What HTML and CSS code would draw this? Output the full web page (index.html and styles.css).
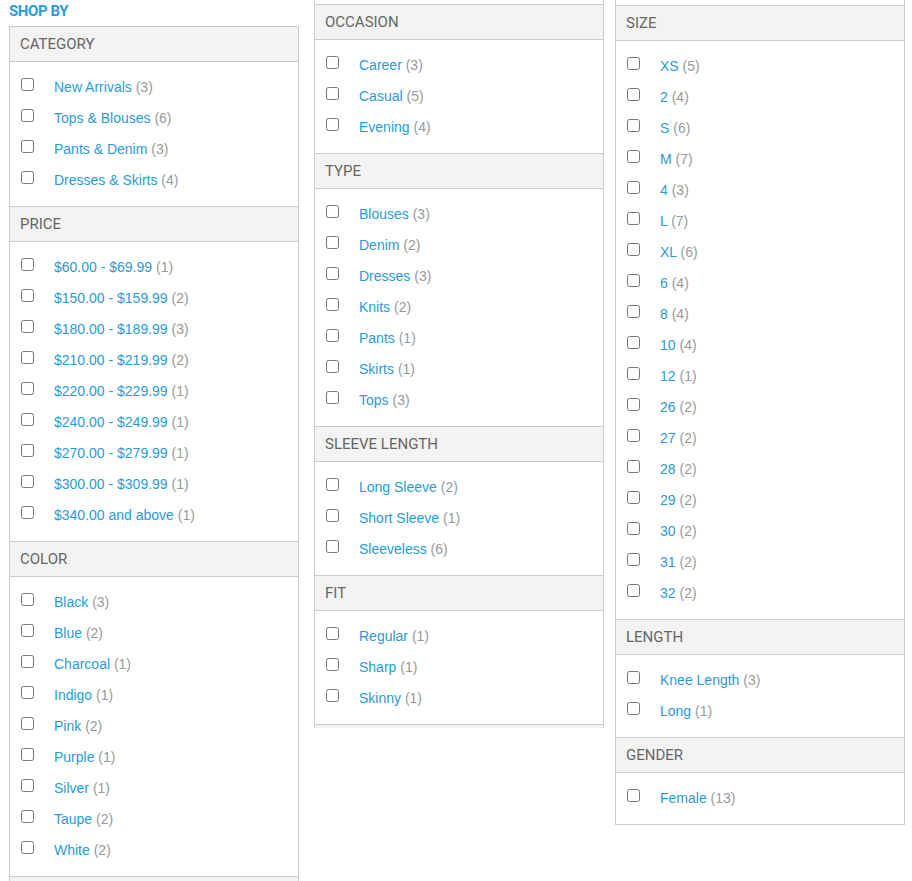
FILE: index.html
```html
<!DOCTYPE html>
<html>
<head>
<meta charset="utf-8">
<link rel="stylesheet" href="styles.css">
</head>
<body>
<div class="layout">
  <div class="col col-1">
    <div class="shop-by">SHOP BY</div>
    <div class="panel">
      <div class="sec-head">CATEGORY</div>
      <ul class="list">
        <li><input type="checkbox"><span class="lbl"><a>New Arrivals</a> <span class="cnt">(3)</span></span></li>
        <li><input type="checkbox"><span class="lbl"><a>Tops &amp; Blouses</a> <span class="cnt">(6)</span></span></li>
        <li><input type="checkbox"><span class="lbl"><a>Pants &amp; Denim</a> <span class="cnt">(3)</span></span></li>
        <li><input type="checkbox"><span class="lbl"><a>Dresses &amp; Skirts</a> <span class="cnt">(4)</span></span></li>
      </ul>
      <div class="sec-head">PRICE</div>
      <ul class="list">
        <li><input type="checkbox"><span class="lbl"><a>$60.00 - $69.99</a> <span class="cnt">(1)</span></span></li>
        <li><input type="checkbox"><span class="lbl"><a>$150.00 - $159.99</a> <span class="cnt">(2)</span></span></li>
        <li><input type="checkbox"><span class="lbl"><a>$180.00 - $189.99</a> <span class="cnt">(3)</span></span></li>
        <li><input type="checkbox"><span class="lbl"><a>$210.00 - $219.99</a> <span class="cnt">(2)</span></span></li>
        <li><input type="checkbox"><span class="lbl"><a>$220.00 - $229.99</a> <span class="cnt">(1)</span></span></li>
        <li><input type="checkbox"><span class="lbl"><a>$240.00 - $249.99</a> <span class="cnt">(1)</span></span></li>
        <li><input type="checkbox"><span class="lbl"><a>$270.00 - $279.99</a> <span class="cnt">(1)</span></span></li>
        <li><input type="checkbox"><span class="lbl"><a>$300.00 - $309.99</a> <span class="cnt">(1)</span></span></li>
        <li><input type="checkbox"><span class="lbl"><a>$340.00 and above</a> <span class="cnt">(1)</span></span></li>
      </ul>
      <div class="sec-head">COLOR</div>
      <ul class="list">
        <li><input type="checkbox"><span class="lbl"><a>Black</a> <span class="cnt">(3)</span></span></li>
        <li><input type="checkbox"><span class="lbl"><a>Blue</a> <span class="cnt">(2)</span></span></li>
        <li><input type="checkbox"><span class="lbl"><a>Charcoal</a> <span class="cnt">(1)</span></span></li>
        <li><input type="checkbox"><span class="lbl"><a>Indigo</a> <span class="cnt">(1)</span></span></li>
        <li><input type="checkbox"><span class="lbl"><a>Pink</a> <span class="cnt">(2)</span></span></li>
        <li><input type="checkbox"><span class="lbl"><a>Purple</a> <span class="cnt">(1)</span></span></li>
        <li><input type="checkbox"><span class="lbl"><a>Silver</a> <span class="cnt">(1)</span></span></li>
        <li><input type="checkbox"><span class="lbl"><a>Taupe</a> <span class="cnt">(2)</span></span></li>
        <li><input type="checkbox"><span class="lbl"><a>White</a> <span class="cnt">(2)</span></span></li>
      </ul>
      <div class="stub-head stub-4"></div>
    </div>
  </div>

  <div class="col col-2">
    <div class="panel">
      <div class="tail tail-4"></div>
      <div class="sec-head">OCCASION</div>
      <ul class="list">
        <li><input type="checkbox"><span class="lbl"><a>Career</a> <span class="cnt">(3)</span></span></li>
        <li><input type="checkbox"><span class="lbl"><a>Casual</a> <span class="cnt">(5)</span></span></li>
        <li><input type="checkbox"><span class="lbl"><a>Evening</a> <span class="cnt">(4)</span></span></li>
      </ul>
      <div class="sec-head">TYPE</div>
      <ul class="list">
        <li><input type="checkbox"><span class="lbl"><a>Blouses</a> <span class="cnt">(3)</span></span></li>
        <li><input type="checkbox"><span class="lbl"><a>Denim</a> <span class="cnt">(2)</span></span></li>
        <li><input type="checkbox"><span class="lbl"><a>Dresses</a> <span class="cnt">(3)</span></span></li>
        <li><input type="checkbox"><span class="lbl"><a>Knits</a> <span class="cnt">(2)</span></span></li>
        <li><input type="checkbox"><span class="lbl"><a>Pants</a> <span class="cnt">(1)</span></span></li>
        <li><input type="checkbox"><span class="lbl"><a>Skirts</a> <span class="cnt">(1)</span></span></li>
        <li><input type="checkbox"><span class="lbl"><a>Tops</a> <span class="cnt">(3)</span></span></li>
      </ul>
      <div class="sec-head">SLEEVE LENGTH</div>
      <ul class="list">
        <li><input type="checkbox"><span class="lbl"><a>Long Sleeve</a> <span class="cnt">(2)</span></span></li>
        <li><input type="checkbox"><span class="lbl"><a>Short Sleeve</a> <span class="cnt">(1)</span></span></li>
        <li><input type="checkbox"><span class="lbl"><a>Sleeveless</a> <span class="cnt">(6)</span></span></li>
      </ul>
      <div class="sec-head">FIT</div>
      <ul class="list">
        <li><input type="checkbox"><span class="lbl"><a>Regular</a> <span class="cnt">(1)</span></span></li>
        <li><input type="checkbox"><span class="lbl"><a>Sharp</a> <span class="cnt">(1)</span></span></li>
        <li><input type="checkbox"><span class="lbl"><a>Skinny</a> <span class="cnt">(1)</span></span></li>
      </ul>
      <div class="stub-head stub-3"></div>
    </div>
  </div>

  <div class="col col-3">
    <div class="panel panel-closed">
      <div class="tail tail-5"></div>
      <div class="sec-head">SIZE</div>
      <ul class="list">
        <li><input type="checkbox"><span class="lbl"><a>XS</a> <span class="cnt">(5)</span></span></li>
        <li><input type="checkbox"><span class="lbl"><a>2</a> <span class="cnt">(4)</span></span></li>
        <li><input type="checkbox"><span class="lbl"><a>S</a> <span class="cnt">(6)</span></span></li>
        <li><input type="checkbox"><span class="lbl"><a>M</a> <span class="cnt">(7)</span></span></li>
        <li><input type="checkbox"><span class="lbl"><a>4</a> <span class="cnt">(3)</span></span></li>
        <li><input type="checkbox"><span class="lbl"><a>L</a> <span class="cnt">(7)</span></span></li>
        <li><input type="checkbox"><span class="lbl"><a>XL</a> <span class="cnt">(6)</span></span></li>
        <li><input type="checkbox"><span class="lbl"><a>6</a> <span class="cnt">(4)</span></span></li>
        <li><input type="checkbox"><span class="lbl"><a>8</a> <span class="cnt">(4)</span></span></li>
        <li><input type="checkbox"><span class="lbl"><a>10</a> <span class="cnt">(4)</span></span></li>
        <li><input type="checkbox"><span class="lbl"><a>12</a> <span class="cnt">(1)</span></span></li>
        <li><input type="checkbox"><span class="lbl"><a>26</a> <span class="cnt">(2)</span></span></li>
        <li><input type="checkbox"><span class="lbl"><a>27</a> <span class="cnt">(2)</span></span></li>
        <li><input type="checkbox"><span class="lbl"><a>28</a> <span class="cnt">(2)</span></span></li>
        <li><input type="checkbox"><span class="lbl"><a>29</a> <span class="cnt">(2)</span></span></li>
        <li><input type="checkbox"><span class="lbl"><a>30</a> <span class="cnt">(2)</span></span></li>
        <li><input type="checkbox"><span class="lbl"><a>31</a> <span class="cnt">(2)</span></span></li>
        <li><input type="checkbox"><span class="lbl"><a>32</a> <span class="cnt">(2)</span></span></li>
      </ul>
      <div class="sec-head">LENGTH</div>
      <ul class="list">
        <li><input type="checkbox"><span class="lbl"><a>Knee Length</a> <span class="cnt">(3)</span></span></li>
        <li><input type="checkbox"><span class="lbl"><a>Long</a> <span class="cnt">(1)</span></span></li>
      </ul>
      <div class="sec-head">GENDER</div>
      <ul class="list">
        <li><input type="checkbox"><span class="lbl"><a>Female</a> <span class="cnt">(13)</span></span></li>
      </ul>
    </div>
  </div>
</div>
</body>
</html>
```

FILE: styles.css
```css
html, body {
  margin: 0;
  padding: 0;
  background: #ffffff;
}

body {
  font-family: "Liberation Sans", Arial, sans-serif;
  font-size: 14px;
  color: #333;
}

.layout {
  display: flex;
  align-items: flex-start;
  padding-left: 9px;
}

.col {
  width: 290px;
  flex: 0 0 290px;
}

.col-1 {
  margin-right: 15px;
}

.col-2 {
  margin-right: 11px;
}

.shop-by {
  height: 26px;
  line-height: 22px;
  font-family: Roboto, "Liberation Sans", sans-serif;
  font-weight: 700;
  font-size: 15px;
  letter-spacing: -0.4px;
  color: #2a9bd8;
}

.panel {
  border-left: 1px solid #cccccc;
  border-right: 1px solid #cccccc;
}

.panel-closed {
  border-bottom: 1px solid #cccccc;
}

.tail-4 { height: 4px; }
.tail-5 { height: 5px; }

.sec-head {
  height: 34px;
  line-height: 34px;
  padding-left: 10px;
  background: #f3f3f3;
  border-top: 1px solid #cccccc;
  border-bottom: 1px solid #cccccc;
  font-family: Roboto, "Liberation Sans", sans-serif;
  font-size: 15px;
  font-weight: 400;
  color: #666666;
}

.stub-head {
  background: #f3f3f3;
  border-top: 1px solid #cccccc;
}

.stub-4 { height: 4px; }
.stub-3 { height: 3px; }

.list {
  list-style: none;
  margin: 0;
  padding: 10px 0 10px 11px;
}

.list li {
  display: flex;
  align-items: flex-start;
  height: 31px;
}

.list input[type="checkbox"] {
  width: 13px;
  height: 13px;
  margin: 6px 20px 0 0;
  flex: 0 0 13px;
}

.lbl {
  line-height: 31px;
  white-space: nowrap;
}

.lbl a {
  color: #2a9bd8;
  text-decoration: none;
}

.cnt {
  color: #9a9a9a;
}
```
